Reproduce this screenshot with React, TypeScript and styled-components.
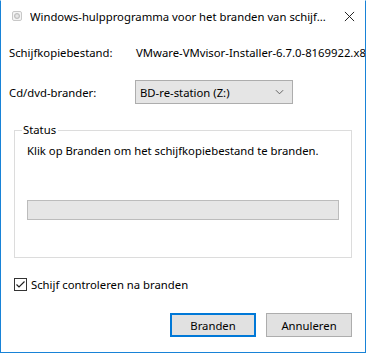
import { createGlobalStyle, styled } from "styled-components";

const GlobalStyle = createGlobalStyle`
  html, body {
    margin: 0;
    padding: 0;
    background: #fff;
  }
  body {
    font-family: "Noto Sans", "Segoe UI", sans-serif;
    font-size: 11.3px;
    color: #000;
  }
`;

export default function App() {
  return (
    <>
      <GlobalStyle />
      <Window>
        {/* titelbalk */}
        <TitleBar>
          <AppIcon viewBox="0 0 10 10">
            <rect x="0.5" y="0.5" width="9" height="9" rx="1.5" fill="#f4f4f4" stroke="#c8c8c8" />
            <circle cx="5" cy="5" r="2.6" fill="#d9d9d9" stroke="#a8a8a8" strokeWidth="0.6" />
            <circle cx="5" cy="5" r="0.7" fill="#fff" />
          </AppIcon>
          <Title>Windows-hulpprogramma voor het branden van schijf...</Title>
          <CloseIcon viewBox="0 0 12 12">
            <path d="M1 1 L11 11 M11 1 L1 11" stroke="#111" strokeWidth="1" />
          </CloseIcon>
        </TitleBar>

        <Body>
          <FieldRow>
            <Label>Schijfkopiebestand:</Label>
            <Value>VMware-VMvisor-Installer-6.7.0-8169922.x86_64.iso</Value>
          </FieldRow>

          <FieldRow $tall>
            <Label>Cd/dvd-brander:</Label>
            <Select>
              <span>BD-re-station (Z:)</span>
              <Chevron viewBox="0 0 10 6">
                <path d="M1 1 L5 5 L9 1" fill="none" stroke="#555" strokeWidth="1" />
              </Chevron>
            </Select>
          </FieldRow>

          <GroupBox>
            <Legend>Status</Legend>
            <StatusText>Klik op Branden om het schijfkopiebestand te branden.</StatusText>
            <Progress />
          </GroupBox>

          <CheckRow>
            <CheckBox viewBox="0 0 13 13">
              <rect x="0.5" y="0.5" width="12" height="12" fill="#fff" stroke="#333" />
              <path d="M2.5 6.5 L5 9 L10.5 3.5" fill="none" stroke="#222" strokeWidth="1.2" />
            </CheckBox>
            <span>Schijf controleren na branden</span>
          </CheckRow>

          <ButtonRow>
            <Button $primary>Branden</Button>
            <Button>Annuleren</Button>
          </ButtonRow>
        </Body>
      </Window>
    </>
  );
}

const Window = styled.div`
  width: 366px;
  height: 353px;
  box-sizing: border-box;
  border: 1px solid #1883d7;
  border-top-color: #fff;
  background: #fff;
  display: flex;
  flex-direction: column;
  overflow: hidden;
`;

const TitleBar = styled.div`
  height: 30px;
  display: flex;
  align-items: center;
  padding: 0 10px 0 11px;
  flex-shrink: 0;
`;

const AppIcon = styled.svg`
  width: 10px;
  height: 10px;
  margin-right: 8px;
`;

const Title = styled.div`
  flex: 1;
  white-space: nowrap;
  overflow: hidden;
`;

const CloseIcon = styled.svg`
  width: 11px;
  height: 11px;
`;

const Body = styled.div`
  flex: 1;
  display: flex;
  flex-direction: column;
  padding: 11px 13px 14px 8px;
`;

const FieldRow = styled.div<{ $tall?: boolean }>`
  display: flex;
  align-items: center;
  height: ${(p) => (p.$tall ? "24px" : "20px")};
  margin-bottom: ${(p) => (p.$tall ? "0" : "18px")};
  white-space: nowrap;
`;

const Label = styled.div`
  width: 126px;
  flex-shrink: 0;
`;

const Value = styled.div`
  white-space: nowrap;
  margin-left: 1px;
`;

const Select = styled.div`
  width: 158px;
  height: 24px;
  box-sizing: border-box;
  border: 1px solid #adadad;
  background: #e5e5e5;
  display: flex;
  align-items: center;
  justify-content: space-between;
  padding: 0 8px 0 4px;
`;

const Chevron = styled.svg`
  width: 9px;
  height: 6px;
`;

const GroupBox = styled.div`
  position: relative;
  margin: 26px 0 0 5px;
  height: 128px;
  border: 1px solid #dcdcdc;
  padding: 10px 12px 0 12px;
  box-sizing: border-box;
`;

const Legend = styled.span`
  position: absolute;
  top: -9px;
  left: 7px;
  padding: 0 2px 0 1px;
  background: #fff;
`;

const StatusText = styled.div`
  line-height: 20px;
`;

const Progress = styled.div`
  margin-top: 39px;
  height: 20px;
  box-sizing: border-box;
  border: 1px solid #bcbcbc;
  background: #e6e6e6;
`;

const CheckRow = styled.div`
  display: flex;
  align-items: center;
  margin: 19px 0 0 5px;
  gap: 4px;
`;

const CheckBox = styled.svg`
  width: 13px;
  height: 13px;
`;

const ButtonRow = styled.div`
  margin-top: auto;
  display: flex;
  justify-content: flex-end;
  gap: 10px;
  padding-bottom: 1px;
`;

const Button = styled.button<{ $primary?: boolean }>`
  width: 86px;
  height: 24px;
  box-sizing: border-box;
  font-family: inherit;
  font-size: 11.3px;
  color: #000;
  background: #e1e1e1;
  border: ${(p) => (p.$primary ? "2px solid #0078d7" : "1px solid #adadad")};
  padding: 0;
`;
